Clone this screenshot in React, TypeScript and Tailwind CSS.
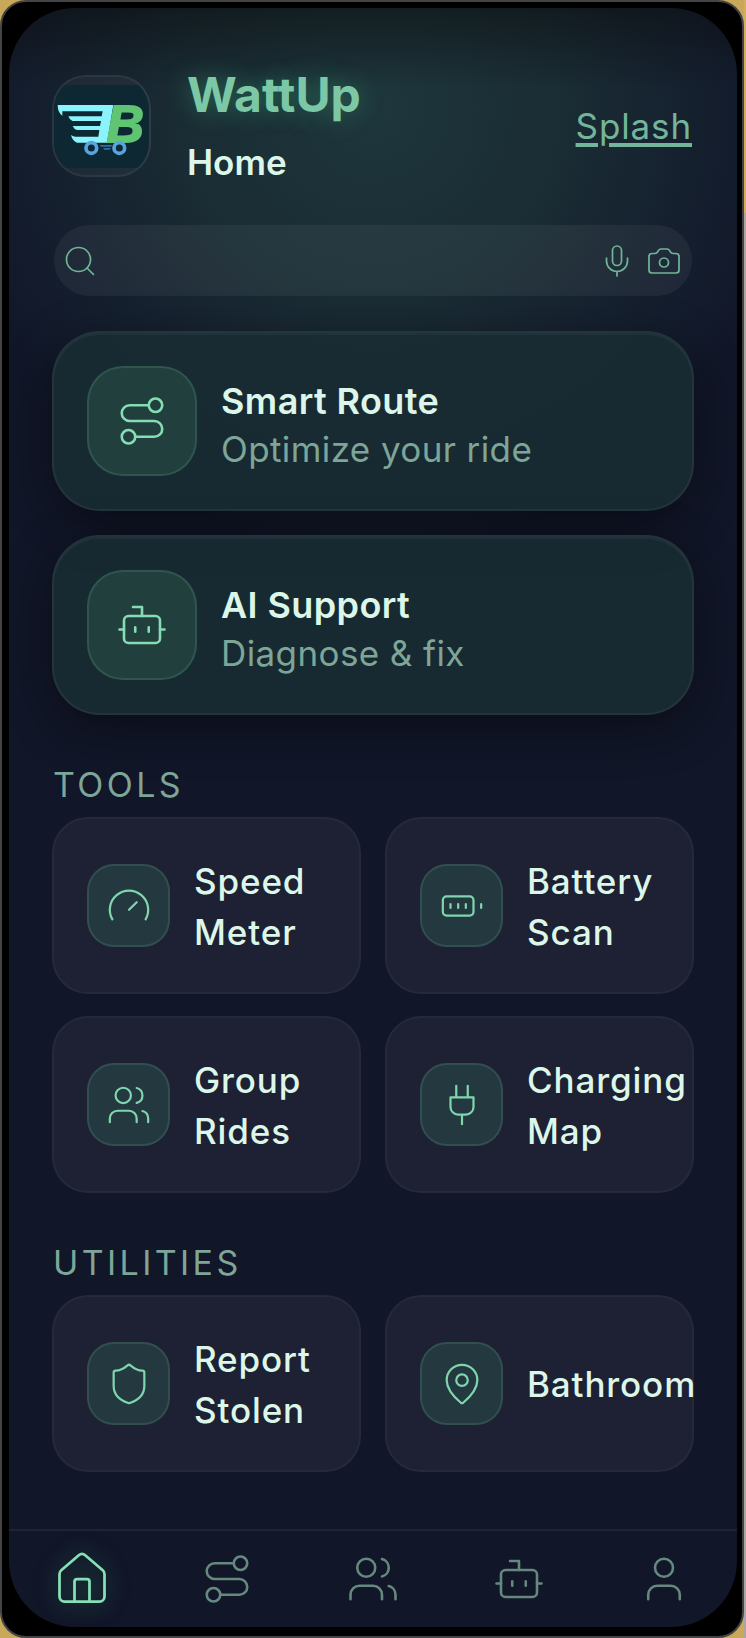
import type { ReactNode } from "react";
import { Search, Mic, Camera, Shield, MapPin, User, House } from "lucide-react";

type IconProps = { className?: string };

function Glyph({ className, children }: IconProps & { children: ReactNode }) {
  return (
    <svg
      viewBox="0 0 24 24"
      fill="none"
      stroke="currentColor"
      strokeWidth={1.15}
      strokeLinecap="round"
      strokeLinejoin="round"
      className={className}
      aria-hidden="true"
    >
      {children}
    </svg>
  );
}

const RouteIcon = ({ className }: IconProps) => (
  <Glyph className={className}>
    <circle cx="6" cy="19" r="3" />
    <path d="M9 19h8.5a3.5 3.5 0 0 0 0-7h-11a3.5 3.5 0 0 1 0-7H15" />
    <circle cx="18" cy="5" r="3" />
  </Glyph>
);

const BotIcon = ({ className }: IconProps) => (
  <Glyph className={className}>
    <path d="M12 8V4H8" />
    <rect width="16" height="12" x="4" y="8" rx="2" />
    <path d="M2 14h2M20 14h2M15 13v2M9 13v2" />
  </Glyph>
);

const UsersIcon = ({ className }: IconProps) => (
  <Glyph className={className}>
    <path d="M16 21v-2a4 4 0 0 0-4-4H6a4 4 0 0 0-4 4v2" />
    <circle cx="9" cy="7" r="4" />
    <path d="M22 21v-2a4 4 0 0 0-3-3.87M16 3.13a4 4 0 0 1 0 7.75" />
  </Glyph>
);

const GaugeIcon = ({ className }: IconProps) => (
  <Glyph className={className}>
    <path d="m12 14 4-4M3.34 19a10 10 0 1 1 17.32 0" />
  </Glyph>
);

const BatteryIcon = ({ className }: IconProps) => (
  <Glyph className={className}>
    <rect width="16" height="10" x="2" y="7" rx="2" />
    <path d="M22 11v2M6 11v2M10 11v2M14 11v2" />
  </Glyph>
);

const PlugIcon = ({ className }: IconProps) => (
  <Glyph className={className}>
    <path d="M12 22v-5M9 8V2M15 8V2M18 8v5a4 4 0 0 1-4 4h-4a4 4 0 0 1-4-4V8Z" />
  </Glyph>
);

const ShieldIcon = ({ className }: IconProps) => <Shield strokeWidth={1.15} className={className} />;
const PinIcon = ({ className }: IconProps) => <MapPin strokeWidth={1.15} className={className} />;
const UserIcon = ({ className }: IconProps) => <User strokeWidth={1.15} className={className} />;
const HouseIcon = ({ className }: IconProps) => <House strokeWidth={1.1} className={className} />;

type Item = { label: string; Icon: (p: IconProps) => ReactNode };

const features: (Item & { detail: string })[] = [
  { label: "Smart Route", detail: "Optimize your ride", Icon: RouteIcon },
  { label: "AI Support", detail: "Diagnose & fix", Icon: BotIcon },
];

const tools: Item[] = [
  { label: "Speed Meter", Icon: GaugeIcon },
  { label: "Battery Scan", Icon: BatteryIcon },
  { label: "Group Rides", Icon: UsersIcon },
  { label: "Charging Map", Icon: PlugIcon },
];

const utilities: Item[] = [
  { label: "Report Stolen", Icon: ShieldIcon },
  { label: "Bathroom", Icon: PinIcon },
];

const tabs: Item[] = [
  { label: "Home", Icon: HouseIcon },
  { label: "Routes", Icon: RouteIcon },
  { label: "Community", Icon: UsersIcon },
  { label: "Assistant", Icon: BotIcon },
  { label: "Profile", Icon: UserIcon },
];

function Logo() {
  return (
    <div className="flex h-[102px] w-[99px] shrink-0 items-center overflow-hidden rounded-[34px] border-2 border-white/[0.06] bg-white/[0.04]">
      <svg viewBox="31 55 285 249" className="w-full" role="img" aria-label="WattUp logo">
        <rect x="31" y="55" width="285" height="249" fill="#0d2833" />
        <path
          d="M42 115H209L190 228H100Q86 222 82 205Q88 210 96 210H164L167 190H100Q91 188 87 178H169L172 163H86Q78 160 74 149H174L177 134H56V147Q42 138 42 115Z"
          fill="#8af3fb"
        />
        <text
          x="189"
          y="226"
          fill="#5fc573"
          stroke="#5fc573"
          strokeWidth="6"
          fontSize="154"
          fontWeight="700"
          fontStyle="italic"
          fontFamily="'Liberation Sans', sans-serif"
        >
          B
        </text>
        <path d="M168 235H206L202 240H172ZM178 244H202L198 249H182Z" fill="#2c6ea3" />
        <circle cx="143" cy="244" r="16" fill="#0d2833" stroke="#57a4e0" strokeWidth="11" />
        <circle cx="227" cy="244" r="16" fill="#0d2833" stroke="#57a4e0" strokeWidth="11" />
      </svg>
    </div>
  );
}

function FeatureCard({ label, detail, Icon }: Item & { detail: string }) {
  return (
    <button
      type="button"
      className="flex h-[180px] w-full items-center gap-[24px] rounded-[48px] border-2 border-white/[0.05] bg-[#192d33]/85 px-[33px] text-left shadow-[0_12px_48px_rgba(0,0,0,0.4),inset_0_2px_0_rgba(255,255,255,0.04)]"
    >
      <span className="flex size-[110px] shrink-0 items-center justify-center rounded-[36px] border-2 border-[#7fd6ae]/15 bg-[#21403d] text-[#86dcb4]">
        <Icon className="size-[54px]" />
      </span>
      <span className="flex flex-col pt-[8px] leading-[48px] tracking-wide">
        <span className="text-[36px] font-semibold text-[#dcf7e9]">{label}</span>
        <span className="text-[35px] text-[#7da598]">{detail}</span>
      </span>
    </button>
  );
}

function Tile({ label, Icon }: Item) {
  return (
    <button
      type="button"
      className="flex h-[177px] min-w-0 items-center gap-[24px] rounded-[36px] border-2 border-white/[0.04] bg-[#1d2133] px-[33px] text-left"
    >
      <span className="flex size-[83px] shrink-0 items-center justify-center rounded-[27px] border-2 border-[#7fd6ae]/15 bg-[#24383f] text-[#7fd6ae]">
        <Icon className="size-[46px]" />
      </span>
      <span className="w-[120px] pt-[2px] text-[35px] leading-[51px] font-medium tracking-wide text-[#dcf7e9]">
        {label}
      </span>
    </button>
  );
}

function Section({ title, items, className }: { title: string; items: Item[]; className?: string }) {
  return (
    <section className={className}>
      <h2 className="px-[1px] text-[34px] leading-[48px] font-normal tracking-widest text-[#7da598]">{title}</h2>
      <div className="mt-[8px] grid grid-cols-2 gap-x-[24px] gap-y-[22px]">
        {items.map((item) => (
          <Tile key={item.label} {...item} />
        ))}
      </div>
    </section>
  );
}

export default function App() {
  return (
    <div className="min-h-screen bg-[#c9a85a] bg-[linear-gradient(#d2af5e_0_213px,#a9a7a3_213px)] bg-[length:2px_100%] bg-right bg-no-repeat pr-[2px] font-['Inter','Noto_Sans',sans-serif]">
      <div className="flex min-h-screen flex-col rounded-[26px] border-2 border-[#444446] bg-black pt-[6px] pr-[5px] pb-[9px] pl-[7px]">
        <div className="flex flex-1 flex-col overflow-hidden rounded-[66px] bg-[#111628] bg-[linear-gradient(rgba(10,12,12,0.5),transparent_80px),radial-gradient(circle_at_50%_100px,#1e363c,#1a2c34_190px,#15202f_320px,#111628_440px)]">
          <main className="flex-1 px-[43px]">
            <header className="flex items-center gap-[36px] pt-[58px] pr-[2px]">
              <Logo />
              <div className="flex-1">
                <p className="text-[48px] leading-[58px] font-bold text-[#7cc8a6] [text-shadow:0_0_24px_rgba(74,222,148,0.35)]">
                  WattUp
                </p>
                <h1 className="mt-[14px] text-[35px] leading-[48px] font-semibold text-[#dcf7e9]">Home</h1>
              </div>
              <a
                href="#splash"
                className="text-[35px] leading-[48px] tracking-wide text-[#72b59b] underline decoration-[4px] underline-offset-[4px]"
              >
                Splash
              </a>
            </header>

            <form
              role="search"
              className="mx-[2px] mt-[39px] flex h-[71px] items-center gap-[11px] rounded-full bg-white/[0.05] pr-[10px] pl-[8px] text-[#6fb596]"
            >
              <label htmlFor="search" aria-label="Search">
                <Search strokeWidth={1.15} className="size-[36px]" />
              </label>
              <input
                id="search"
                type="text"
                className="h-full min-w-0 flex-1 bg-transparent text-[34px] text-[#dcf7e9] outline-none"
              />
              <button type="button" aria-label="Voice search">
                <Mic strokeWidth={1.15} className="size-[36px]" />
              </button>
              <button type="button" aria-label="Camera search">
                <Camera strokeWidth={1.15} className="size-[36px]" />
              </button>
            </form>

            <div className="mt-[35px] flex flex-col gap-[24px]">
              {features.map((f) => (
                <FeatureCard key={f.label} {...f} />
              ))}
            </div>

            <Section title="TOOLS" items={tools} className="mt-[46px]" />
            <Section title="UTILITIES" items={utilities} className="mt-[46px]" />
          </main>

          <nav className="grid h-[98px] grid-cols-5 border-t-2 border-white/[0.06]" aria-label="Main">
            {tabs.map(({ label, Icon }, i) => (
              <a
                key={label}
                href={"#" + label.toLowerCase()}
                aria-label={label}
                className={
                  i === 0
                    ? "flex items-center justify-center text-[#86e0b5]"
                    : "flex items-center justify-center text-[#66897f]"
                }
              >
                <Icon
                  className={i === 0 ? "size-[60px] drop-shadow-[0_0_12px_rgba(74,222,148,0.4)]" : "size-[54px]"}
                />
              </a>
            ))}
          </nav>
        </div>
      </div>
    </div>
  );
}
